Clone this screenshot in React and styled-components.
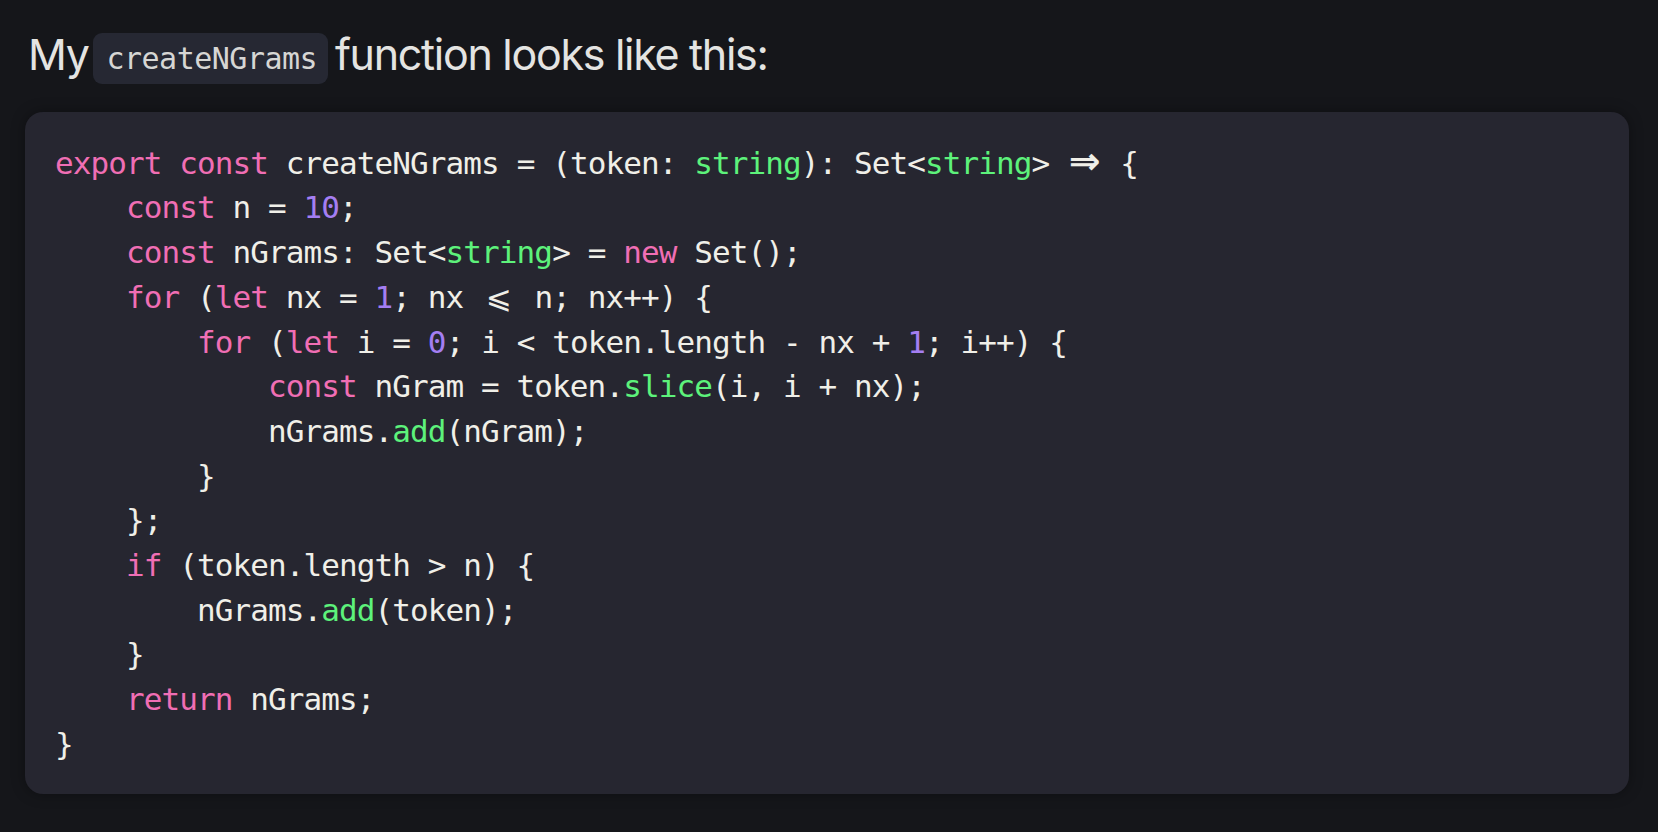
import React from 'react'
import styled, { createGlobalStyle } from 'styled-components'

const GlobalStyle = createGlobalStyle`
  html, body {
    margin: 0;
    padding: 0;
    background: #15161a;
  }
  body {
    font-family: Inter, 'Noto Sans', sans-serif;
    color: #e6e6e4;
  }
`

const CELL = 17.75

// each line is a list of [kind, text]; kind: t text, k keyword, g function/type, n number, l ligature
const code = [
  [['k', 'export'], ['t', ' '], ['k', 'const'], ['t', ' createNGrams = (token: '], ['g', 'string'], ['t', '): Set<'], ['g', 'string'], ['t', '> '], ['l', '⇒'], ['t', ' {']],
  [['t', '    '], ['k', 'const'], ['t', ' n = '], ['n', '10'], ['t', ';']],
  [['t', '    '], ['k', 'const'], ['t', ' nGrams: Set<'], ['g', 'string'], ['t', '> = '], ['k', 'new'], ['t', ' Set();']],
  [['t', '    '], ['k', 'for'], ['t', ' ('], ['k', 'let'], ['t', ' nx = '], ['n', '1'], ['t', '; nx '], ['l', '⩽'], ['t', ' n; nx++) {']],
  [['t', '        '], ['k', 'for'], ['t', ' ('], ['k', 'let'], ['t', ' i = '], ['n', '0'], ['t', '; i < token.length - nx + '], ['n', '1'], ['t', '; i++) {']],
  [['t', '            '], ['k', 'const'], ['t', ' nGram = token.'], ['g', 'slice'], ['t', '(i, i + nx);']],
  [['t', '            nGrams.'], ['g', 'add'], ['t', '(nGram);']],
  [['t', '        }']],
  [['t', '    };']],
  [['t', '    '], ['k', 'if'], ['t', ' (token.length > n) {']],
  [['t', '        nGrams.'], ['g', 'add'], ['t', '(token);']],
  [['t', '    }']],
  [['t', '    '], ['k', 'return'], ['t', ' nGrams;']],
  [['t', '}']],
]

const colors = {
  t: '#f0efe8',
  k: '#f06eb4',
  g: '#5df27b',
  n: '#a47ef2',
}

const App = () => (
  <Page>
    <GlobalStyle />
    <Heading>
      My <InlineCode>createNGrams</InlineCode> function looks like this:
    </Heading>
    <CodeCard>
      {code.map((line, i) => (
        <Line key={i}>
          {line.map(([kind, text], j) =>
            kind === 'l'
              ? <Ligature key={j} $big={text === '⇒'}>{text}</Ligature>
              : <Token key={j} $kind={kind}>{text}</Token>
          )}
        </Line>
      ))}
    </CodeCard>
  </Page>
)

export default App

const Page = styled.main`
  padding: 29px 29px 40px 25px;
  display: flex;
  flex-direction: column;
  gap: 28px;
`

const Heading = styled.p`
  margin: 0;
  padding-left: 3px;
  font-family: Inter, 'Noto Sans', sans-serif;
  font-size: 43px;
  line-height: 51px;
  letter-spacing: -1.3px;
  color: #e4e4e2;
  white-space: nowrap;
`

const InlineCode = styled.code`
  display: inline-block;
  height: 51px;
  line-height: 51px;
  vertical-align: middle;
  margin: 0 -4px 0 -6px;
  padding: 0 11px 0 13px;
  border-radius: 9px;
  background: #262833;
  color: #d6d6d4;
  font-family: 'DejaVu Sans Mono', 'Liberation Mono', monospace;
  font-size: 30px;
  letter-spacing: -0.5px;
`

const CodeCard = styled.pre`
  margin: 0;
  padding: 29px 30px 28px;
  border-radius: 18px;
  background: #262630;
  box-shadow: 0 0 14px rgba(0, 0, 0, 0.35);
  font-family: 'DejaVu Sans Mono', 'Liberation Mono', monospace;
  font-size: 31px;
  letter-spacing: -0.91px;
  line-height: 44.7px;
  color: #f0efe8;
`

const Line = styled.div`
  height: 44.7px;
  white-space: pre;
`

const Token = styled.span`
  color: ${p => colors[p.$kind]};
`

const Ligature = styled.span`
  display: inline-block;
  width: ${CELL * 2}px;
  text-align: center;
  font-family: 'DejaVu Sans', 'DejaVu Sans Mono', sans-serif;
  font-size: ${p => (p.$big ? '38px' : '31px')};
  font-weight: ${p => (p.$big ? 'bold' : 'normal')};
  letter-spacing: 0;
  line-height: 1;
  color: #f0efe8;
`
